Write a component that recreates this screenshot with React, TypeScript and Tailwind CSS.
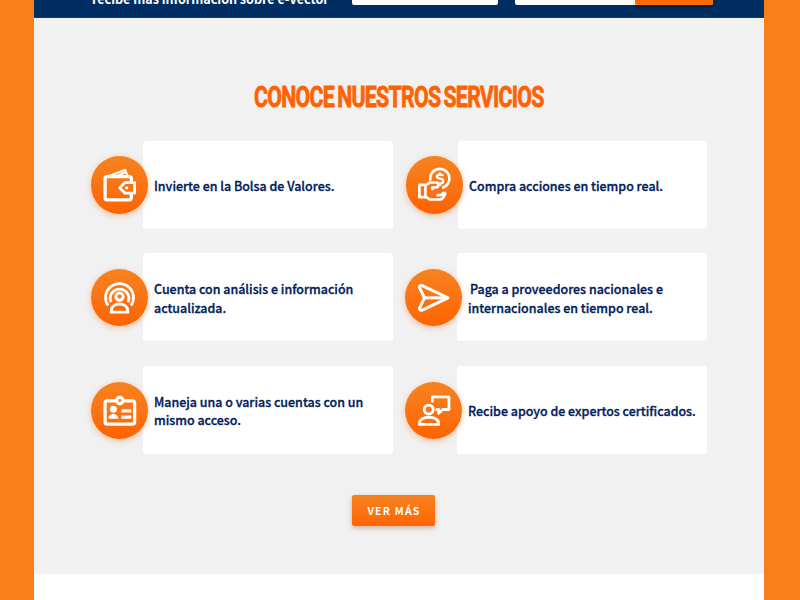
import type { ReactNode } from "react";

const WalletIcon = () => (
  <svg viewBox="33 64 172 173" className="size-full" fill="none" stroke="white" strokeWidth="10" strokeLinejoin="round">
    <path d="M154 142v-10q0-6-6-6H80q-5 0-5 6v58q0 6 6 6h67q6 0 6-6v-12" />
    <path d="M86 124l49-18 8 18M108 125l28-11" strokeWidth="6.5" />
    <path d="M164 144h-29l-16 16 16 16h29z" strokeWidth="8.5" />
    <circle cx="140" cy="160" r="5" fill="white" stroke="none" />
  </svg>
);

const HandCoinIcon = () => (
  <svg viewBox="33 64 172 173" className="size-full" fill="none" stroke="white" strokeWidth="8" strokeLinejoin="round">
    <path d="M106 138a29 29 0 1 1 35 22" />
    <path d="M145 124q-3-4-10-4-9 0-9 6 0 5 9 6 10 2 10 8 0 7-10 7-7 0-10-5M135 113v7M135 147v7" strokeWidth="7" />
    <path d="M73 151h18v37H73zM91 153l13-9h18q8 0 8 7 0 8-8 8h-10v8M91 186l13 9h32q5 0 8-5l8-14M124 182h12q5 0 8-6h10" />
  </svg>
);

const BroadcastIcon = () => (
  <svg viewBox="33 56 172 173" className="size-full" fill="none" stroke="white" strokeWidth="8.5">
    <path d="M84 166a42 42 0 1 1 69 0" />
    <path d="M93 156a28 28 0 1 1 51 0" />
    <circle cx="118.500" cy="139" r="11" strokeWidth="9" />
    <path d="M94 186v-5c0-26 49-26 49 0v5z" strokeWidth="9" />
  </svg>
);

const SendIcon = () => (
  <svg viewBox="29 56 172 173" className="size-full" fill="none" stroke="white" strokeWidth="9" strokeLinejoin="round">
    <path d="M82 107l76 36-76 36q-9 4-10-4l15-32-15-32q1-8 10-4z" />
    <path d="M87 143h70" />
  </svg>
);

const BadgeIcon = () => (
  <svg viewBox="33 64 172 173" className="size-full" fill="none" stroke="white" strokeWidth="10">
    <path d="M106 121H82q-7 0-7 7v56q0 7 7 7h75q7 0 7-7v-56q0-7-7-7h-24" />
    <circle cx="119.500" cy="120" r="9.500" />
    <circle cx="100" cy="146" r="10.500" fill="white" stroke="none" />
    <path d="M85 175c0-19 30-19 30 0z" fill="white" stroke="none" />
    <path d="M124 151h30M124 170h30" />
  </svg>
);

const ExpertIcon = () => (
  <svg viewBox="29 64 172 173" className="size-full" fill="none" stroke="white" strokeWidth="8.5" strokeLinejoin="round">
    <circle cx="100" cy="147" r="13.500" />
    <path d="M72 192v-3c0-25 58-25 58 0v3z" />
    <path d="M111 126v-17h50v38h-19l-12 11v-11h-9" />
  </svg>
);

type LineProps = { children: ReactNode; className: string };
const Line = ({ children, className }: LineProps) => (
  <span className={`block w-max origin-left whitespace-pre ${className}`}>{children}</span>
);

type ServiceProps = { icon: ReactNode; children: ReactNode; className?: string; inset?: string };
const Service = ({ icon, children, className = "", inset = "pl-[11px]" }: ServiceProps) => (
  <article className={`flex h-[88px] min-w-0 items-center ${className}`}>
    <div className="z-10 mt-px mr-[-5.400px] size-[57.400px] shrink-0 rounded-full bg-linear-to-b from-[#f5831f] to-[#ff6200] shadow-[0_2px_6px_rgba(255,98,0,0.35)]">
      {icon}
    </div>
    <div
      className={`flex h-full min-w-0 flex-1 flex-col justify-center rounded-[3px] bg-white pt-[3px] text-[12.500px] leading-[18.500px] font-medium text-[#00205b] [-webkit-text-stroke:0.3px_#00205b] ${inset}`}
    >
      {children}
    </div>
  </article>
);

export default function App() {
  return (
    <div className="h-[600px] w-[800px] overflow-hidden bg-[#f97f1b] pr-9 pl-[34px] font-['Noto_Sans_CJK_SC','Noto_Sans',sans-serif]">
      <main className="h-full bg-white">
        <header className="flex h-[18px] items-start overflow-hidden border-b border-[#16366d] bg-[#002d62] pl-[58px]">
          <p className="-mt-[11px] w-[260px] text-[13px] leading-5 font-bold whitespace-nowrap text-white">
            <Line className="scale-x-[0.963]">recibe más información sobre e-Vector</Line>
          </p>
          <div className="h-[4.500px] w-[146px] rounded-b-[2px] bg-white" />
          <div className="ml-[17px] flex h-[4.500px] w-[198px] rounded-b-[2px] bg-white">
            <div className="ml-auto w-[78px] rounded-b-[2px] bg-[#ff6a04] shadow-[0_2px_5px_rgba(0,0,0,0.35)]" />
          </div>
        </header>
        <section className="flex h-[556px] flex-col items-center bg-[#f1f1f1] pt-[61px]">
          <h2 className="h-[61.500px] w-[290px] font-['Roboto',sans-serif] text-[30px] leading-9 font-bold tracking-[-1px] [word-spacing:-2px] whitespace-nowrap text-[#ff6200] [-webkit-text-stroke:0.8px_#ff6200]">
            <Line className="scale-x-[0.710]">CONOCE NUESTROS SERVICIOS</Line>
          </h2>
          <div className="grid w-[616px] grid-cols-[302px_302px] justify-between gap-y-[24.700px]">
            <Service icon={<WalletIcon />}>
              <Line className="scale-x-[0.995]">Invierte en la Bolsa de Valores.</Line>
            </Service>
            <Service icon={<HandCoinIcon />} className="ml-px" inset="pl-[10.500px]">
              <Line className="scale-x-[0.995]">Compra acciones en tiempo real.</Line>
            </Service>
            <Service icon={<BroadcastIcon />}>
              <Line className="scale-x-[0.995]">Cuenta con análisis e información</Line>
              <Line className="scale-x-[0.995]">actualizada.</Line>
            </Service>
            <Service icon={<SendIcon />}>
              <Line className="ml-[2px] scale-x-[0.995]">Paga a proveedores nacionales e</Line>
              <Line className="scale-x-[0.995]">internacionales en tiempo real.</Line>
            </Service>
            <Service icon={<BadgeIcon />}>
              <Line className="scale-x-[0.995]">Maneja una o varias cuentas con un</Line>
              <Line className="scale-x-[0.995]">mismo acceso.</Line>
            </Service>
            <Service icon={<ExpertIcon />}>
              <Line className="scale-x-[0.995]">Recibe apoyo de expertos certificados.</Line>
            </Service>
          </div>
          <button className="mt-[41px] ml-[-12px] h-[31px] w-[83px] rounded-[2px] bg-linear-to-b from-[#f5821f] to-[#ff6400] pt-px pl-[2px] text-[10.500px] leading-[30px] font-bold tracking-[1.200px] text-white shadow-[0_2px_5px_rgba(140,60,0,0.35)]">
            VER MÁS
          </button>
        </section>
      </main>
    </div>
  );
}
